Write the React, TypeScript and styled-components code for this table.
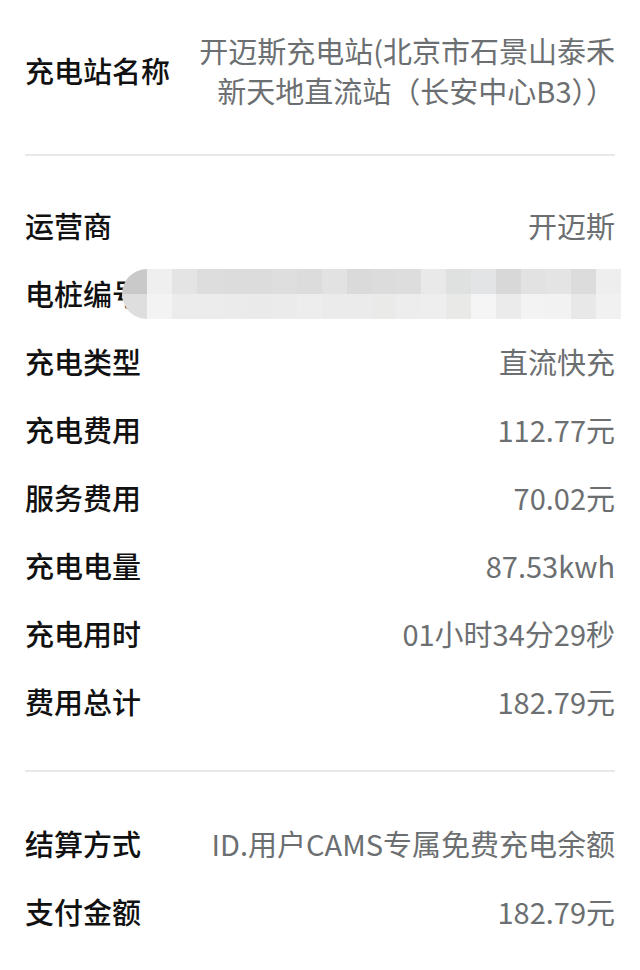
import React from "react"
import styled, { createGlobalStyle } from "styled-components"

const GlobalStyle = createGlobalStyle`
  html, body {
    margin: 0;
    padding: 0;
    background: #ffffff;
  }
  body {
    font-family: "Noto Sans CJK SC", "Noto Sans", sans-serif;
  }
`

const Page = styled.div`
  width: 640px;
  padding: 0 25px 0 25px;
  box-sizing: border-box;
`

const Header = styled.div`
  display: flex;
  justify-content: space-between;
  align-items: center;
  padding: 30px 0 44px;
`

const Label = styled.span`
  font-size: 29px;
  font-weight: 500;
  color: #111111;
  white-space: nowrap;
`

const StationName = styled.div`
  text-align: right;
  font-size: 29px;
  line-height: 40px;
  color: #6c6f71;
`

const Divider = styled.hr`
  border: none;
  height: 2px;
  margin: 0;
  background: #e8e8e8;
`

const Section = styled.div<{ $top: number; $bottom: number }>`
  padding-top: ${p => p.$top}px;
  padding-bottom: ${p => p.$bottom}px;
`

const Row = styled.div<{ $h?: number }>`
  position: relative;
  display: flex;
  justify-content: space-between;
  align-items: center;
  height: ${p => p.$h ?? 68}px;
`

const Value = styled.span`
  font-size: 29px;
  color: #6c6f71;
  white-space: nowrap;
`

const Mosaic = styled.div`
  position: absolute;
  left: 97px;
  right: -6px;
  top: 10px;
  height: 50px;
  display: grid;
  grid-template-columns: repeat(20, 1fr);
  grid-template-rows: 1fr 1fr;
  border-radius: 26px 0 0 26px;
  overflow: hidden;
  filter: blur(0.6px);
`

const Cell = styled.div<{ $c: string }>`
  background: ${p => p.$c};
`

const topShades = [
  "#c9c9c9", "#efefef", "#e4e4e4", "#dddddd", "#dcdcdc", "#dcdcdc", "#dedede",
  "#dcdcdc", "#e2e2e2", "#dadada", "#dcdcdc", "#dddddd", "#e9e9e9", "#dfe0e0",
  "#e2e4e5", "#d8d8d8", "#e2e2e2", "#e4e4e4", "#dcdcdc", "#eeeeee",
]
const bottomShades = [
  "#dedede", "#f3f3f3", "#ececec", "#ececec", "#ebebeb", "#eaeaea", "#ebebeb",
  "#ededed", "#ebebeb", "#ebebeb", "#eaeae9", "#ecedec", "#eeeeee", "#e9eae8",
  "#f5f5f5", "#ebebeb", "#f3f3f3", "#f2f2f2", "#e8e8e8", "#f1f1f1",
]

const details: [string, string][] = [
  ["运营商", "开迈斯"],
  ["电桩编号", ""],
  ["充电类型", "直流快充"],
  ["充电费用", "112.77元"],
  ["服务费用", "70.02元"],
  ["充电电量", "87.53kwh"],
  ["充电用时", "01小时34分29秒"],
  ["费用总计", "182.79元"],
]

const App = () => (
  <Page>
    <GlobalStyle />
    <Header>
      <Label>充电站名称</Label>
      <StationName>
        开迈斯充电站(北京市石景山泰禾
        <br />
        新天地直流站（长安中心B3））
      </StationName>
    </Header>
    <Divider />
    <Section $top={35} $bottom={35}>
      {details.map(([label, value]) => (
        <Row key={label}>
          <Label>{label}</Label>
          {value ? (
            <Value>{value}</Value>
          ) : (
            <Mosaic>
              {topShades.map((c, i) => (
                <Cell key={"t" + i} $c={c} />
              ))}
              {bottomShades.map((c, i) => (
                <Cell key={"b" + i} $c={c} />
              ))}
            </Mosaic>
          )}
        </Row>
      ))}
    </Section>
    <Divider />
    <Section $top={37} $bottom={20}>
      <Row>
        <Label>结算方式</Label>
        <Value>ID.用户CAMS专属免费充电余额</Value>
      </Row>
      <Row $h={67}>
        <Label>支付金额</Label>
        <Value>182.79元</Value>
      </Row>
    </Section>
  </Page>
)

export default App
